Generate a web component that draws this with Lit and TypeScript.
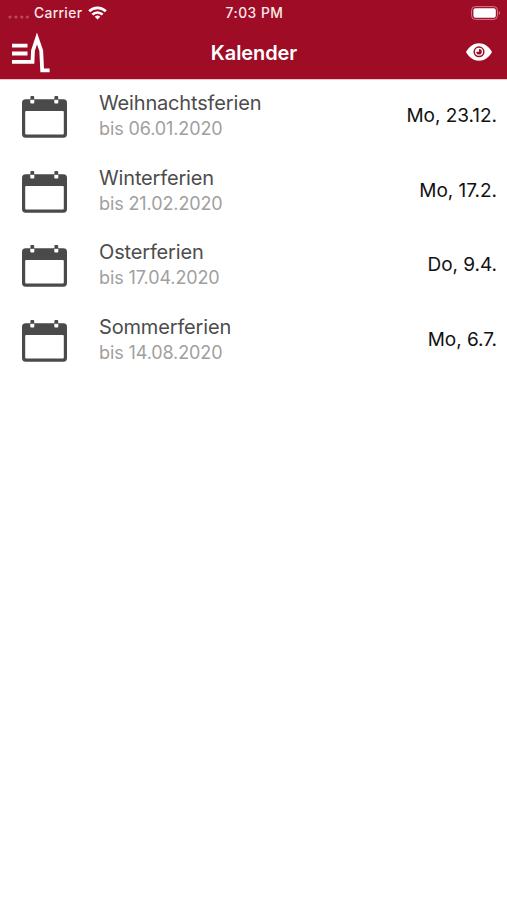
import { LitElement, html, css, svg } from "lit";
import { customElement } from "lit/decorators.js";

interface Holiday {
  name: string;
  until: string;
  start: string;
}

const holidays: Holiday[] = [
  { name: "Weihnachtsferien", until: "bis 06.01.2020", start: "Mo, 23.12." },
  { name: "Winterferien", until: "bis 21.02.2020", start: "Mo, 17.2." },
  { name: "Osterferien", until: "bis 17.04.2020", start: "Do, 9.4." },
  { name: "Sommerferien", until: "bis 14.08.2020", start: "Mo, 6.7." },
];

const stubs = [10.3, 34.3].map(
  (x) => svg`
    <rect x=${x - 2} y="3.4" width="4" height="4.2" rx="1" fill="#fff"></rect>
    <rect x=${x - 1.9} y="0" width="3.8" height="3.8" rx="1" fill="#4a4a4a"></rect>`
);

@customElement("app-root")
export class AppRoot extends LitElement {
  static styles = css`
    :host {
      display: block;
      height: 900px;
      background: #fff;
      font-family: Inter, "Liberation Sans", sans-serif;
      overflow: hidden;
    }
    svg {
      display: block;
      flex: none;
    }
    header {
      height: 80px;
      background: #9e0c25;
      color: #fff;
      border-bottom: 1px solid #f0c4ca;
      box-sizing: border-box;
    }
    .bar {
      display: grid;
      grid-template-columns: 1fr auto 1fr;
      align-items: center;
    }
    .status {
      height: 26px;
      padding: 0 6px 0 8px;
      font-size: 13.8px;
      font-weight: 500;
      color: #fbe9ec;
    }
    .carrier {
      display: flex;
      align-items: center;
    }
    .carrier span {
      margin: 0 6px 0 4px;
      letter-spacing: 0.35px;
    }
    .time {
      letter-spacing: 0.5px;
    }
    .end {
      justify-self: end;
    }
    .nav {
      height: 52px;
      padding: 0 15px 0 11px;
    }
    h1 {
      margin: 1px -2.5px 0 2.5px;
      font-size: 20px;
      font-weight: 600;
      letter-spacing: -0.1px;
    }
    ul {
      list-style: none;
      margin: 0;
      padding: 0;
    }
    li {
      display: flex;
      align-items: center;
      height: 74.6px;
      padding: 0 10px 0 22px;
      box-sizing: border-box;
    }
    .text {
      flex: 1;
      margin: -2.4px 0 0 32px;
    }
    .name {
      font-size: 20px;
      line-height: 26px;
      letter-spacing: -0.16px;
      color: #4c4c4c;
    }
    .until {
      font-size: 18px;
      line-height: 26px;
      letter-spacing: -0.11px;
      color: #a0a0a0;
    }
    .start {
      font-size: 19px;
      line-height: 26px;
      letter-spacing: -0.04px;
      color: #111;
      margin-top: -2.6px;
    }
  `;

  render() {
    return html`
      <header>
        <div class="bar status">
          <div class="carrier">
            <svg width="22" height="12" viewBox="0 0 22 12" fill="#bd4a5e">
              <circle cx="2" cy="10" r="1.6"></circle>
              <circle cx="8" cy="10" r="1.6"></circle>
              <circle cx="13.8" cy="10" r="1.6"></circle>
              <circle cx="19.3" cy="10" r="1.6"></circle>
            </svg>
            <span>Carrier</span>
            <svg width="19" height="14" viewBox="0 0 19 14" fill="none" stroke="#fff" stroke-width="2.7">
              <path d="M1.2 5.2a11.8 11.8 0 0 1 16.6 0"></path>
              <path d="M4.4 8.6a7.2 7.2 0 0 1 10.2 0"></path>
              <path d="M9.5 13.6L6.7 10.8a4 4 0 0 1 5.6 0z" fill="#fff" stroke="none"></path>
            </svg>
          </div>
          <div class="time">7:03 PM</div>
          <svg class="end" width="30" height="14" viewBox="0 0 30 14">
            <rect x="0.6" y="0.6" width="25.8" height="12.8" rx="3.6" fill="none" stroke="#cf7d8a" stroke-width="1"></rect>
            <rect x="2.4" y="2.3" width="22.4" height="9.4" rx="2" fill="#fff"></rect>
            <path d="M27.8 5v4c1.6-.5 1.6-3.500 0-4z" fill="#cf7d8a"></path>
          </svg>
        </div>
        <div class="bar nav">
          <svg width="40" height="42" viewBox="0 0 40 42" fill="none" stroke="#fff" stroke-width="3.800">
            <path d="M1 14.600h15.500M1 22.500h15.500"></path>
            <path d="M1 30.800H21.500L22 19.500L26 7.500L30.200 19.500L31.200 39.300H38.600" stroke-miterlimit="10"></path>
          </svg>
          <h1>Kalender</h1>
          <svg class="end" width="26" height="18" viewBox="0 0 26 18">
            <path d="M0 9C3.200 3.400 7.800.3 13 .3S22.800 3.400 26 9c-3.200 5.600-7.800 8.700-13 8.700S3.200 14.600 0 9z" fill="#fff"></path>
            <circle cx="13" cy="8.800" r="4.800" fill="none" stroke="#9e0c25" stroke-width="1.500"></circle>
            <path d="M13 8.800V6a2.800 2.800 0 1 1-2.800 2.800z" fill="#9e0c25"></path>
          </svg>
        </div>
      </header>
      <ul>
        ${holidays.map(
          (h) => html`<li>
            <svg width="45" height="42" viewBox="0 0 45 42">
              <rect x="0" y="3.300" width="45" height="38.400" rx="3.600" fill="#4a4a4a"></rect>
              <rect x="3.200" y="15" width="38.600" height="23.600" rx="1" fill="#fff"></rect>
              ${stubs}
            </svg>
            <div class="text">
              <div class="name">${h.name}</div>
              <div class="until">${h.until}</div>
            </div>
            <div class="start">${h.start}</div>
          </li>`
        )}
      </ul>
    `;
  }
}
